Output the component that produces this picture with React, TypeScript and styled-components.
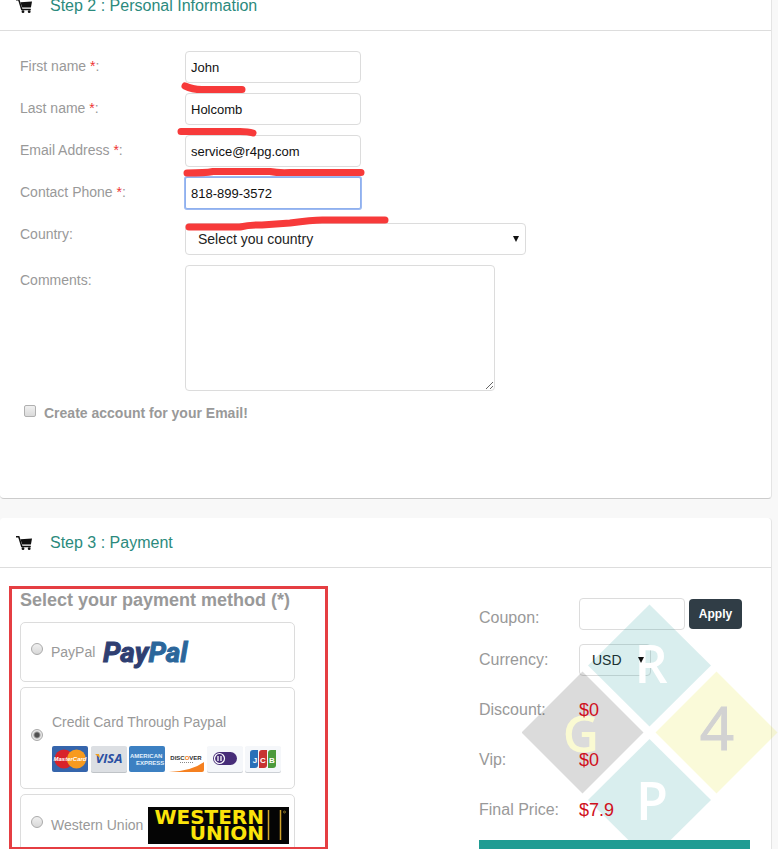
import React from 'react';
import styled, { createGlobalStyle } from 'styled-components';

const GlobalStyle = createGlobalStyle`
  * { box-sizing: border-box; }
  html, body { margin: 0; background: #f8f8f8; }
  body, input, select, textarea, button { font-family: "Liberation Sans", Arial, sans-serif; }
`;

const Viewport = styled.main`
  height: 100vh;
  overflow: hidden;
  color: #999;
  font-size: 14px;
`;

const Page = styled.div`
  display: flex;
  flex-direction: column;
  gap: 19px;
  margin-top: -19px;
  padding-right: 6px;
`;

const Panel = styled.section`
  background: #fff;
  border-right: 1px solid #e4e4e4;
  border-bottom: 1px solid #ccc;
  border-radius: 4px;
`;

const PanelHeader = styled.header`
  display: flex;
  align-items: center;
  gap: 18px;
  height: 50px;
  padding-left: 16px;
  border-bottom: 1px solid #ddd;
`;

const PanelTitle = styled.h2`
  margin: 0;
  font-size: 16px;
  font-weight: normal;
  line-height: 20px;
  color: #2b8a7d;
`;

const CartSvg = styled.svg`
  display: block;
  width: 16px;
  height: 16px;
`;

const FormBody = styled.div`
  position: relative;
  padding: 20px 20px 75px;
`;

const FieldRow = styled.div`
  display: grid;
  grid-template-columns: 165px minmax(0, 1fr);
  align-items: start;
  margin-bottom: 10px;
`;

const FieldLabel = styled.label`
  line-height: 30px;
`;

const Star = styled.span`
  color: #e33;
`;

const TextInput = styled.input<{ $active?: boolean }>`
  width: 176px;
  height: 32px;
  padding: 0 5px;
  border: 1px solid ${p => (p.$active ? '#8fb0ee' : '#dcdcdc')};
  border-radius: ${p => (p.$active ? '2px' : '4px')};
  box-shadow: ${p => (p.$active ? '0 0 0 1px #9dbaf2' : 'none')};
  background: #fff;
  color: #111;
  font-size: 13px;
  outline: none;
`;

const SelectWrap = styled.div<{ $width: number; $top?: number }>`
  position: relative;
  width: ${p => p.$width}px;
  margin-top: ${p => p.$top ?? 0}px;
  &::after {
    content: '';
    position: absolute;
    z-index: 1;
    top: 13px;
    right: 7px;
    border: solid transparent;
    border-width: 6px 3px 0;
    border-top-color: #111;
    pointer-events: none;
  }
`;

const Select = styled.select`
  display: block;
  appearance: none;
  width: 100%;
  height: 32px;
  padding: 0 12px;
  border: 1px solid #dcdcdc;
  border-radius: 4px;
  background: #fff;
  color: #222;
  font-size: 14px;
`;

const TextArea = styled.textarea`
  display: block;
  width: 310px;
  height: 126px;
  border: 1px solid #dcdcdc;
  border-radius: 4px;
  background: #fff;
`;

const CheckRow = styled.label`
  display: flex;
  align-items: center;
  gap: 8px;
  height: 20px;
  margin-top: 12px;
  padding-left: 4px;
  font-weight: bold;
`;

const CheckBox = styled.input`
  appearance: none;
  width: 12px;
  height: 12px;
  margin: 0 0 4px;
  border: 1px solid #b0b0b0;
  border-radius: 2px;
  background: linear-gradient(#f0f0f0, #dadada);
`;

const Marks = styled.svg`
  position: absolute;
  top: 45px;
  left: 170px;
  width: 230px;
  height: 160px;
  pointer-events: none;
`;

const PaymentBody = styled.div`
  display: flex;
  justify-content: space-between;
  padding: 20px 21px 20px 20px;
`;

const Methods = styled.fieldset`
  position: relative;
  width: 275px;
  margin: 0;
  padding: 0;
  border: 0;
`;

const MethodsTitle = styled.h3`
  margin: 0 0 10px;
  font-size: 18px;
  line-height: 24px;
  white-space: nowrap;
`;

const Highlight = styled.div`
  position: absolute;
  top: -2px;
  left: -11px;
  width: 319px;
  height: 264px;
  border: 3px solid #e53e42;
  pointer-events: none;
`;

const Method = styled.label<{ $height: number }>`
  display: flex;
  align-items: center;
  gap: 8px;
  height: ${p => p.$height}px;
  margin-bottom: 5px;
  padding-left: 10px;
  border: 1px solid #dcdcdc;
  border-radius: 5px;
`;

const Radio = styled.input`
  appearance: none;
  flex: none;
  width: 12px;
  height: 12px;
  margin: 0 0 6px;
  border: 1px solid #aaa;
  border-radius: 50%;
  background: linear-gradient(#f0f0f0, #d8d8d8);
  &:checked {
    background: radial-gradient(circle, #505050 0 2px, #e6e6e6 4px);
  }
`;

const MethodStack = styled.span`
  display: flex;
  flex-direction: column;
  gap: 16px;
  padding: 10px 0 0 1px;
`;

const MethodInfo = styled.span<{ $gap: number }>`
  display: flex;
  align-items: center;
  gap: ${p => p.$gap}px;
  white-space: nowrap;
`;

const Logo = styled.svg`
  display: block;
  flex: none;
`;

const Summary = styled.div`
  position: relative;
  width: 271px;
  padding-top: 9px;
`;

const SummaryRow = styled.div<{ $height: number; $gap?: number }>`
  display: grid;
  grid-template-columns: 100px 1fr;
  align-items: center;
  height: ${p => p.$height}px;
  margin-bottom: ${p => p.$gap ?? 0}px;
  font-size: 16px;
`;

const CouponControls = styled.div`
  display: flex;
  align-items: center;
  gap: 4px;
  padding-bottom: 8px;
`;

const CouponInput = styled(TextInput)`
  width: 106px;
`;

const ApplyButton = styled.button`
  width: 53px;
  height: 30px;
  padding: 0;
  border: 0;
  border-radius: 4px;
  background: #303d46;
  color: #fff;
  font-size: 12px;
  font-weight: bold;
`;

const Price = styled.output`
  position: relative;
  z-index: 1;
  color: #d0101c;
  font-size: 18px;
`;

const SubmitButton = styled.button`
  display: block;
  width: 100%;
  height: 40px;
  margin-top: 5px;
  border: 0;
  background: #1f9c93;
`;

const Watermark = styled.svg`
  position: absolute;
  top: 16px;
  left: 43px;
  width: 256px;
  height: 236px;
  pointer-events: none;
  font-family: "Open Sans", "Noto Sans", sans-serif;
`;

const CartIcon = () => (
  <CartSvg viewBox="0 0 16 16" aria-hidden="true">
    <path d="M0 1.8h2.8l3 9.6h9" fill="none" stroke="#111" strokeWidth="1.5" />
    <path d="M4.4 4.2 16 3.6 14.9 9.6H6.2z" fill="#111" />
    <circle cx="7" cy="13.7" r="1.4" fill="#111" />
    <circle cx="13.2" cy="13.7" r="1.4" fill="#111" />
  </CartSvg>
);

const PayPalLogo = () => (
  <Logo width="90" height="36" viewBox="0 0 90 36" aria-hidden="true">
    <g fontFamily="Roboto, sans-serif" fontWeight="bold" fontStyle="italic" fontSize="28" strokeWidth="1">
      <text x="1" y="28" fill="#2f3f72" stroke="#2f3f72">
        Pay<tspan fill="#2b669b" stroke="#2b669b">Pal</tspan>
      </text>
    </g>
  </Logo>
);

const CardLogos = () => (
  <Logo width="230" height="27" viewBox="0 0 230 27" fontFamily="Liberation Sans, Arial, sans-serif" aria-hidden="true">
    <rect width="36" height="26" rx="2" fill="#3565ac" />
    <circle cx="12" cy="13" r="9.5" fill="#d8232a" />
    <circle cx="24.5" cy="13" r="9.5" fill="#f79a1f" />
    <text x="18" y="15" fontSize="6" fontWeight="bold" fontStyle="italic" fill="#fff" textAnchor="middle">MasterCard</text>

    <rect x="39" y="1" width="36" height="26" rx="2" fill="#bfc3c7" />
    <rect x="39" width="36" height="26" rx="2" fill="#dcdfe3" />
    <text x="57" y="17" fontSize="13" fontWeight="bold" fontStyle="italic" fill="#2a4fa2" textAnchor="middle" fontFamily="Open Sans, sans-serif">VISA</text>
    <path d="M43 8h4l1 4z" fill="#f0a020" />

    <rect x="77" width="36" height="26" rx="2" fill="#3c80c2" />
    <g fontSize="6" fontWeight="bold" fill="#e3f0fb">
      <text x="78" y="12">AMERICAN</text>
      <text x="84" y="19">EXPRESS</text>
    </g>

    <rect x="116" width="36" height="26" rx="2" fill="#fff" />
    <path d="M117 26Q140 25 152 16v8q0 2-2 2z" fill="#f58020" />
    <text x="134" y="14" fontSize="6" fontWeight="bold" fill="#303030" textAnchor="middle">DISC<tspan fill="#f58020">O</tspan>VER</text>
    <path d="M128 16.5h13" stroke="#888" strokeDasharray="1 1" />

    <rect x="155" y="1" width="36" height="26" rx="2" fill="#ccd0d5" />
    <rect x="155" width="36" height="26" rx="2" fill="#f5f7fa" />
    <rect x="161" y="6" width="24" height="13" rx="6.5" fill="#472d78" />
    <circle cx="167.5" cy="12.5" r="5" fill="#472d78" stroke="#fff" strokeWidth="1.2" />
    <path d="M166 10v5M169 10v5" stroke="#fff" strokeWidth="1.3" />

    <rect x="193" y="1" width="36" height="26" rx="2" fill="#ccd0d5" />
    <rect x="193" width="36" height="26" rx="2" fill="#f5f7fa" />
    <path d="M198 7q0-3 3-3h5v15q0 3-3 3h-5z" fill="#2b70b8" />
    <path d="M207 7q0-3 3-3h5v15q0 3-3 3h-5z" fill="#c73432" />
    <path d="M216 7q0-3 3-3h5v15q0 3-3 3h-5z" fill="#4c9a3b" />
    <g fontSize="8" fontWeight="bold" fill="#fff" textAnchor="middle">
      <text x="203" y="17">J</text>
      <text x="211" y="17">C</text>
      <text x="220" y="17">B</text>
    </g>
  </Logo>
);

const WesternUnionLogo = () => (
  <Logo width="141" height="37" viewBox="0 0 141 37" aria-hidden="true">
    <rect width="141" height="37" fill="#050505" />
    <g fontFamily="DejaVu Sans, sans-serif" fontWeight="bold" fontSize="20" fill="#fbe40a" textAnchor="end">
      <text x="116" y="17">WESTERN</text>
      <text x="116" y="33">UNION</text>
    </g>
    <path d="M120.5 3v30M132.5 3v30" stroke="#d2a52c" strokeWidth="1.5" />
    <circle cx="136.5" cy="5" r="1" fill="none" stroke="#b89a30" strokeWidth="0.7" />
  </Logo>
);

const textFields = [
  { id: 'first', label: 'First name', value: 'John', type: 'text' },
  { id: 'last', label: 'Last name', value: 'Holcomb', type: 'text' },
  { id: 'email', label: 'Email Address', value: 'service@r4pg.com', type: 'email' },
  { id: 'phone', label: 'Contact Phone', value: '818-899-3572', type: 'tel', active: true },
];

const prices = [
  { label: 'Discount:', value: '$0' },
  { label: 'Vip:', value: '$0' },
  { label: 'Final Price:', value: '$7.9' },
];

export default function App() {
  return (
    <Viewport>
      <GlobalStyle />
      <Page>
        <Panel>
          <PanelHeader>
            <CartIcon />
            <PanelTitle>Step 2 : Personal Information</PanelTitle>
          </PanelHeader>
          <FormBody>
            {textFields.map(f => (
              <FieldRow key={f.id}>
                <FieldLabel htmlFor={f.id}>
                  {f.label} <Star>*</Star>:
                </FieldLabel>
                <TextInput id={f.id} type={f.type} defaultValue={f.value} $active={f.active} />
              </FieldRow>
            ))}
            <FieldRow>
              <FieldLabel htmlFor="country">Country:</FieldLabel>
              <SelectWrap $width={341} $top={4}>
                <Select id="country">
                  <option>Select you country</option>
                </Select>
              </SelectWrap>
            </FieldRow>
            <FieldRow>
              <FieldLabel htmlFor="comments">Comments:</FieldLabel>
              <TextArea id="comments" />
            </FieldRow>
            <CheckRow>
              <CheckBox type="checkbox" />
              Create account for your Email!
            </CheckRow>
            <Marks viewBox="170 76 230 160" aria-hidden="true">
              <g fill="none" stroke="#f73a3a" strokeWidth="7" strokeLinecap="round" strokeLinejoin="round">
                <path d="M185 86Q192 89.500 202 89.500H242" />
                <path d="M181 131.500H240Q248 131.500 253 133" />
                <path d="M187 173Q205 173 213 171.500H270Q278 173 290 172.500H361" />
                <path d="M189 227H240Q250 224.500 262 225L290 223Q315 219.500 325 220H385" />
              </g>
            </Marks>
          </FormBody>
        </Panel>

        <Panel>
          <PanelHeader>
            <CartIcon />
            <PanelTitle>Step 3 : Payment</PanelTitle>
          </PanelHeader>
          <PaymentBody>
            <Methods>
              <MethodsTitle>Select your payment method (*)</MethodsTitle>
              <Method $height={60}>
                <Radio type="radio" name="method" />
                <MethodInfo $gap={7}>
                  PayPal
                  <PayPalLogo />
                </MethodInfo>
              </Method>
              <Method $height={102}>
                <Radio type="radio" name="method" defaultChecked />
                <MethodStack>
                  Credit Card Through Paypal
                  <CardLogos />
                </MethodStack>
              </Method>
              <Method $height={62}>
                <Radio type="radio" name="method" />
                <MethodInfo $gap={5}>
                  Western Union
                  <WesternUnionLogo />
                </MethodInfo>
              </Method>
              <Highlight />
            </Methods>

            <Summary>
              <SummaryRow $height={42}>
                <label htmlFor="coupon">Coupon:</label>
                <CouponControls>
                  <CouponInput id="coupon" />
                  <ApplyButton type="button">Apply</ApplyButton>
                </CouponControls>
              </SummaryRow>
              <SummaryRow $height={42} $gap={4}>
                <label htmlFor="currency">Currency:</label>
                <SelectWrap $width={72}>
                  <Select id="currency">
                    <option>USD</option>
                  </Select>
                </SelectWrap>
              </SummaryRow>
              {prices.map(p => (
                <SummaryRow key={p.label} $height={50}>
                  <span>{p.label}</span>
                  <Price>{p.value}</Price>
                </SummaryRow>
              ))}
              <SubmitButton type="button" />
              <Watermark viewBox="522 604 256 236" aria-hidden="true">
                <path d="M649.5 604.5 711 665.5 649.5 726.5 588 665.5z" fill="#008f8c" fillOpacity="0.15" />
                <path d="M649.5 739 711 800 649.5 861 588 800z" fill="#008f8c" fillOpacity="0.15" />
                <path d="M582.5 671.5 643.5 732.5 582.5 793.5 521.5 732.5z" fillOpacity="0.14" />
                <path d="M716.5 671.5 777.5 732.5 716.5 793.5 655.5 732.5z" fill="#e1e114" fillOpacity="0.16" />
                <g textAnchor="middle" fontWeight="600">
                  <text x="651" y="683" fontSize="52" fill="#fff">R</text>
                  <text x="652" y="820" fontSize="52" fill="#fff">P</text>
                  <text x="581" y="752" fontSize="50" fill="#fafad2">G</text>
                  <text x="717" y="750" fontSize="60" fontWeight="400" fill="#d2d2d2" stroke="#d2d2d2">4</text>
                </g>
              </Watermark>
            </Summary>
          </PaymentBody>
        </Panel>
      </Page>
    </Viewport>
  );
}
